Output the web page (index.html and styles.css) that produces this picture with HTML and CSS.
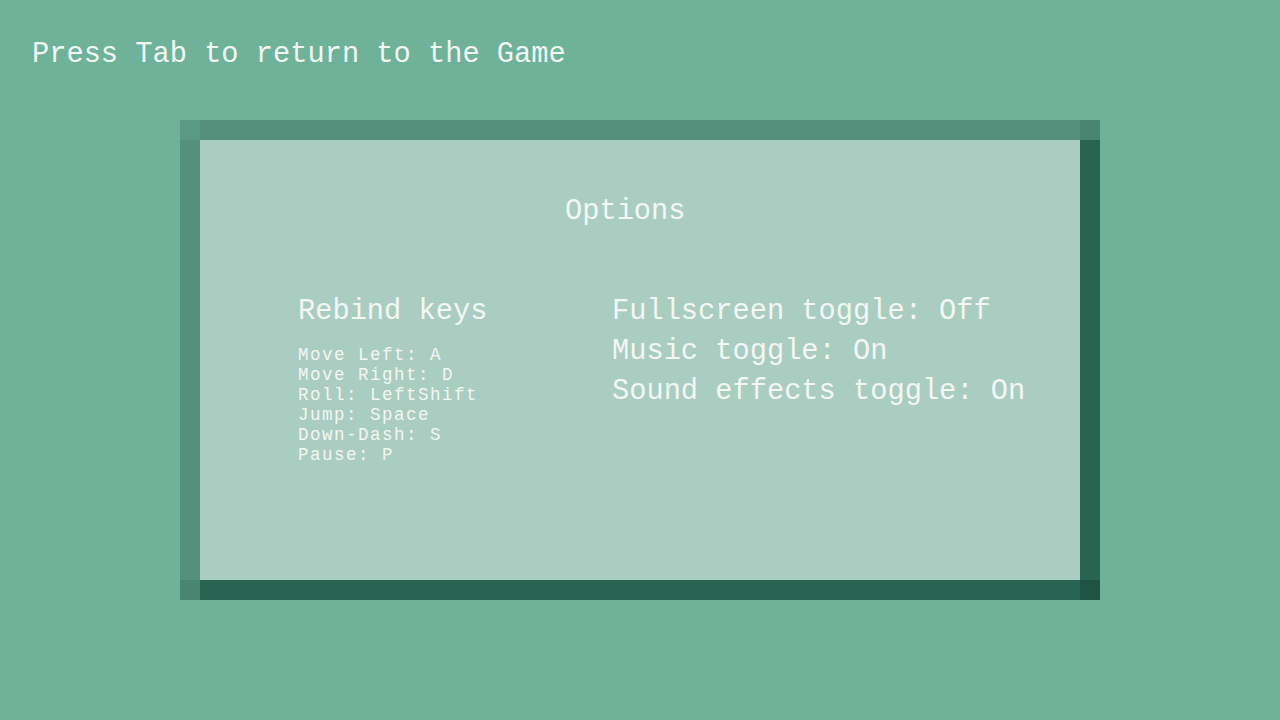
FILE: index.html
```html
<!DOCTYPE html>
<html>
<head>
<meta charset="utf-8">
<link rel="stylesheet" href="styles.css">
</head>
<body>
<div class="screen">
  <div class="hint">Press Tab to return to the Game</div>
  <div class="panel">
    <div class="c c-tl"></div><div class="e e-top"></div><div class="c c-tr"></div>
    <div class="e e-left"></div>
    <div class="inner">
      <div class="title">Options</div>
      <div class="cols">
        <div class="col-left">
          <div class="big">Rebind keys</div>
          <div class="keys">
            <div class="key">Move Left: A</div>
            <div class="key">Move Right: D</div>
            <div class="key">Roll: LeftShift</div>
            <div class="key">Jump: Space</div>
            <div class="key">Down-Dash: S</div>
            <div class="key">Pause: P</div>
          </div>
        </div>
        <div class="col-right">
          <div class="big">Fullscreen toggle: Off</div>
          <div class="big">Music toggle: On</div>
          <div class="big">Sound effects toggle: On</div>
        </div>
      </div>
    </div>
    <div class="e e-right"></div>
    <div class="c c-bl"></div><div class="e e-bottom"></div><div class="c c-br"></div>
  </div>
</div>
</body>
</html>
```
FILE: styles.css
```css
html, body {
  margin: 0;
  padding: 0;
}
body {
  background: #6eb29a;
  width: 1280px;
  height: 720px;
  overflow: hidden;
  font-family: "Liberation Mono", "DejaVu Sans Mono", monospace;
  color: #f3f7f4;
}
.screen {
  display: flex;
  flex-direction: column;
  padding: 35px 0 0 32px;
}
.hint {
  font-size: 28.7px;
  line-height: 40px;
  height: 40px;
}
.panel {
  margin: 45px 0 0 148px;
  width: 920px;
  height: 480px;
  display: grid;
  grid-template-columns: 20px 880px 20px;
  grid-template-rows: 20px 440px 20px;
}
.c-tl { background: #5a9985; }
.e-top { background: #55907c; }
.c-tr { background: #4a8571; }
.e-left { background: #55907c; }
.e-right { background: #286451; }
.c-bl { background: #4a8571; }
.e-bottom { background: #286451; }
.c-br { background: #1f5343; }
.inner {
  background: #a9cdc1;
  padding: 52px 0 0 98px;
  display: flex;
  flex-direction: column;
}
.title {
  font-size: 28.7px;
  line-height: 40px;
  padding-left: 267px;
}
.cols {
  display: flex;
  margin-top: 60px;
}
.col-left {
  width: 314px;
  display: flex;
  flex-direction: column;
}
.col-right {
  display: flex;
  flex-direction: column;
}
.big {
  font-size: 28.7px;
  line-height: 40px;
  white-space: nowrap;
}
.keys {
  margin-top: 13px;
  display: flex;
  flex-direction: column;
}
.key {
  font-size: 17.5px;
  letter-spacing: 1.5px;
  line-height: 20px;
  height: 20px;
  white-space: nowrap;
}
```
